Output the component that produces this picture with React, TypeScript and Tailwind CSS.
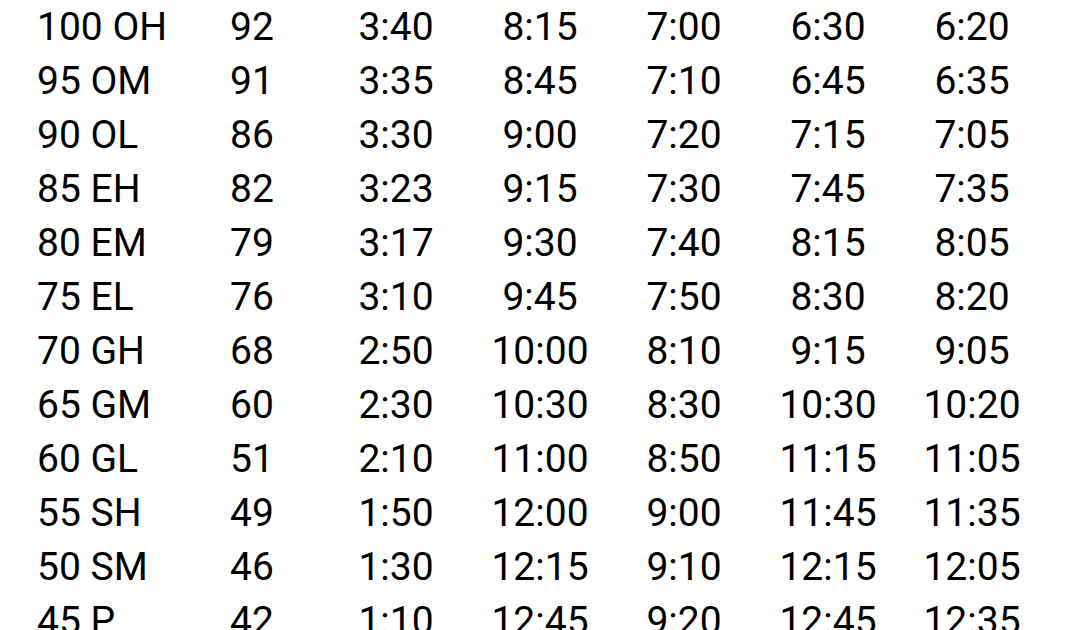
const rows: string[][] = [
  ['100 OH', '92', '3:40', '8:15', '7:00', '6:30', '6:20'],
  ['95 OM', '91', '3:35', '8:45', '7:10', '6:45', '6:35'],
  ['90 OL', '86', '3:30', '9:00', '7:20', '7:15', '7:05'],
  ['85 EH', '82', '3:23', '9:15', '7:30', '7:45', '7:35'],
  ['80 EM', '79', '3:17', '9:30', '7:40', '8:15', '8:05'],
  ['75 EL', '76', '3:10', '9:45', '7:50', '8:30', '8:20'],
  ['70 GH', '68', '2:50', '10:00', '8:10', '9:15', '9:05'],
  ['65 GM', '60', '2:30', '10:30', '8:30', '10:30', '10:20'],
  ['60 GL', '51', '2:10', '11:00', '8:50', '11:15', '11:05'],
  ['55 SH', '49', '1:50', '12:00', '9:00', '11:45', '11:35'],
  ['50 SM', '46', '1:30', '12:15', '9:10', '12:15', '12:05'],
  ['45 P', '42', '1:10', '12:45', '9:20', '12:45', '12:35'],
];

export default function App() {
  return (
    <div className="h-[630px] w-[1080px] overflow-hidden bg-white text-black font-['Roboto',sans-serif] text-[39px] leading-[54px]">
      <div className="grid grid-cols-[143px_repeat(6,144px)] pl-[37px]">
        {rows.map((row) =>
          row.map((cell, i) => (
            <div key={row[0] + i} className={i === 0 ? 'text-left whitespace-nowrap' : 'text-center whitespace-nowrap'}>
              {cell}
            </div>
          ))
        )}
      </div>
    </div>
  );
}
